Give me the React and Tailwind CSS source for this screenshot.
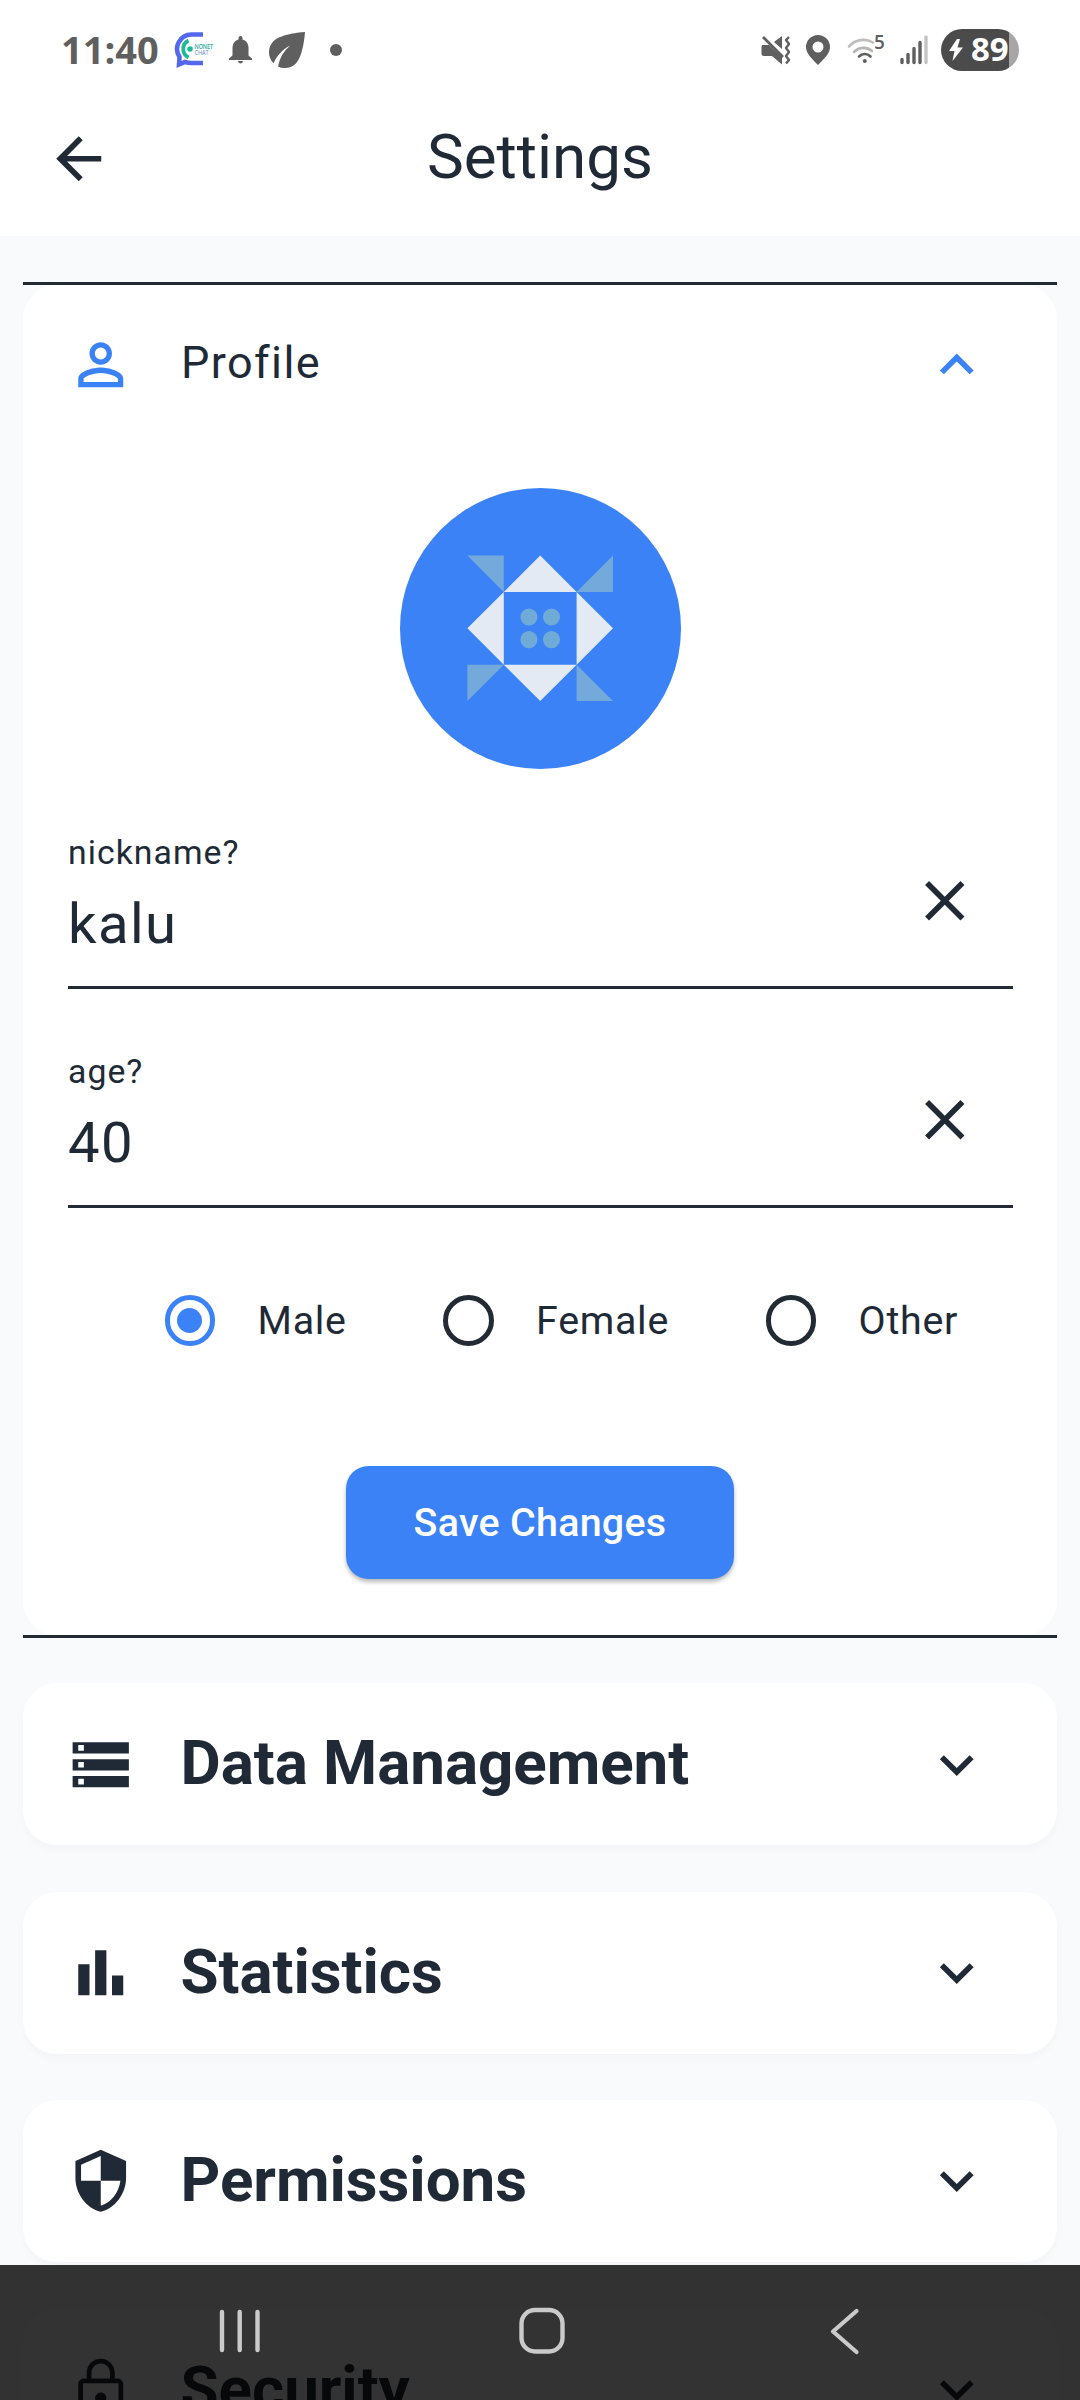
import React from "react";

const PATHS = {
  back: "M20 11H7.83l5.59-5.59L12 4l-8 8 8 8 1.41-1.41L7.83 13H20v-2z",
  person:
    "M12 5.9a2.1 2.1 0 1 1 0 4.2 2.1 2.1 0 0 1 0-4.2m0 9c2.97 0 6.1 1.46 6.1 2.1v1.1H5.9V17c0-.64 3.13-2.1 6.1-2.1M12 4C9.79 4 8 5.79 8 8s1.79 4 4 4 4-1.79 4-4-1.79-4-4-4zm0 9c-2.67 0-8 1.34-8 4v3h16v-3c0-2.66-5.33-4-8-4z",
  up: "M12 8l-6 6 1.41 1.41L12 10.83l4.59 4.58L18 14z",
  down: "M16.59 8.59L12 13.17 7.41 8.59 6 10l6 6 6-6z",
  close:
    "M19 6.41L17.59 5 12 10.59 6.41 5 5 6.41 10.59 12 5 17.59 6.41 19 12 13.41 17.59 19 19 17.59 13.41 12z",
  storage:
    "M2 20h20v-4H2v4zm2-3h2v2H4v-2zM2 4v4h20V4H2zm4 3H4V5h2v2zm-4 7h20v-4H2v4zm2-3h2v2H4v-2z",
  bars: "M4 9h4v11H4zM16 13h4v7h-4zM10 4h4v16h-4z",
  shield:
    "M12 1L3 5v6c0 5.55 3.84 10.74 9 12 5.16-1.26 9-6.45 9-12V5l-9-4zm0 10.99h7c-.53 4.12-3.28 7.79-7 8.94V12H5V6.3l7-3.11v8.8z",
  lock: "M18 8h-1V6c0-2.76-2.24-5-5-5S7 3.24 7 6v2H6c-1.1 0-2 .9-2 2v10c0 1.1.9 2 2 2h12c1.1 0 2-.9 2-2V10c0-1.1-.9-2-2-2zM8.7 6c0-1.82 1.48-3.3 3.3-3.3s3.3 1.48 3.3 3.3v2H8.7V6zM18.3 20.3H5.7V9.7h12.6v10.6zM12 17c1.1 0 2-.9 2-2s-.9-2-2-2-2 .9-2 2 .9 2 2 2z",
  leaf: "M6.05 8.05a7 7 0 0 0-.02 9.88c1.47-3.4 4.09-6.24 7.36-7.93A15.95 15.95 0 0 0 8 19.32c2.6 1.23 5.8.78 7.95-1.37C19.43 14.47 20 4 20 4S9.53 4.57 6.05 8.05z",
};

function Icon({ name, className = "size-[67.5px]" }) {
  return (
    <svg viewBox="0 0 24 24" fill="currentColor" className={`shrink-0 ${className}`}>
      <path d={PATHS[name]} />
    </svg>
  );
}

function StatusBar() {
  return (
    <div className="absolute inset-x-0 top-0 flex h-[100px] items-center justify-between pl-[61px] pr-[61px] text-[#5f5f5f]">
      <div className="flex items-center">
        <span className="-mt-[2px] w-[113px] font-['Open_Sans',sans-serif] text-[38px] leading-[52px] font-bold">11:40</span>
        <svg viewBox="0 0 42 38" className="h-[38px] w-[42px]">
          <path d="M29 3.500H17.500A14.500 14.500 0 0 0 5.500 26L5 33.500 11 31Q14 32 17.500 32H29" fill="none" stroke="#5468ee" strokeWidth="4.500" />
          <path d="M14.500 9.500a9.500 9.500 0 0 0 0 17" fill="none" stroke="#1cb99b" strokeWidth="3.800" />
          <circle cx="16" cy="18" r="2.800" fill="#1cb99b" />
          <text x="20.500" y="17.500" fontSize="6.500" fontWeight="600" fontFamily="Open Sans, sans-serif" fill="#25a6a0" textLength="18.500" lengthAdjust="spacingAndGlyphs">NONET</text>
          <text x="20.500" y="24" fontSize="6.500" fontFamily="Open Sans, sans-serif" fill="#5a7fc0" textLength="14" lengthAdjust="spacingAndGlyphs">CHAT</text>
        </svg>
        <svg viewBox="0 0 23 28" fill="currentColor" className="ml-[13px] h-[28px] w-[23px]">
          <path d="M9.500 2a2 2 0 0 1 4 0v1.500C17.500 4.500 19.500 8 19.500 12v7.500l3.500 3V24H0v-1.500l3.500-3V12c0-4 2-7.500 6-8.500zM9 25h5a2.500 2.500 0 0 1-5 0z" />
        </svg>
        <Icon name="leaf" className="ml-2 size-[54px]" />
        <span className="ml-[16px] size-[12px] rounded-full bg-current" />
      </div>
      <div className="flex items-center">
        <svg viewBox="0 0 30 30" className="h-[30px] w-[30px]">
          <path d="M1 10h7l13 12v7.500L11 21H3a2.500 2.500 0 0 1-2.500-2.500V12zM13 7l8-6v13z" fill="currentColor" />
          <path d="M2 2l20 20" stroke="currentColor" strokeWidth="2.600" />
          <path d="M28 2l-3 3 3 4-3 4 3 4-3 4 3 4-3 3.500" fill="none" stroke="currentColor" strokeWidth="2.400" strokeLinejoin="round" />
        </svg>
        <svg viewBox="0 0 24 30" className="ml-[15px] h-[30px] w-[24px]">
          <path fill="currentColor" fillRule="evenodd" d="M12 0a12 12 0 0 0-12 12c0 7 6 11.500 12 18 6-6.500 12-11 12-18A12 12 0 0 0 12 0zm0 6.500a5.500 5.500 0 1 1 0 11 5.500 5.500 0 0 1 0-11z" />
        </svg>
        <div className="ml-[17px] flex w-[53px] items-start">
          <svg viewBox="0 0 28 28" className="mt-[1px] h-[28px] w-[28px]" fill="none" strokeWidth="2.600" strokeLinecap="round">
            <path d="M2 9.500A19 19 0 0 1 26 5.500" stroke="#bdbdbd" />
            <path d="M7 15a13 13 0 0 1 18-1" stroke="#b5b5b5" />
            <path d="M12 19.500a8 8 0 0 1 11.500 0" stroke="currentColor" />
            <circle cx="17.800" cy="24" r="2" fill="currentColor" />
          </svg>
          <span className="-mt-[4px] -ml-[1px] font-['Open_Sans',sans-serif] text-[19px] leading-[20px] font-semibold">5</span>
        </div>
        <svg viewBox="0 0 28 30" className="h-[30px] w-[28px]" strokeWidth="3.400" strokeLinecap="round" stroke="currentColor">
          <path d="M2 24.500v3M8 19.500v8M14 13.500v14M20 7.500v20" />
          <path d="M26 2v25.500" stroke="#c4c4c4" />
        </svg>
        <div className="ml-[13px] flex h-[42px] w-[78px] items-center rounded-full bg-[linear-gradient(to_right,#4b4b4b_68px,#a6a6a6_68px)] pl-[7px] text-white">
          <svg viewBox="0 0 16 24" className="h-[24px] w-[16px]">
            <path d="M9 1L1 13h5.500l-2 10L15 9.500H9.500L12 1z" fill="currentColor" />
          </svg>
          <span className="-mt-[2px] ml-[7px] font-['Open_Sans',sans-serif] text-[33px] leading-[40px] font-bold">89</span>
        </div>
      </div>
    </div>
  );
}

function Avatar() {
  return (
    <svg viewBox="0 0 281 281" className="mx-auto mt-[44px] block size-[281px]">
      <circle cx="140.500" cy="140.500" r="140.500" fill="#3b82f6" />
      <g transform="translate(67.400 67.500) scale(36.400)">
        <path d="M1 1L2 0l1 1zM3 1l1 1-1 1zM3 3L2 4 1 3zM1 3L0 2l1-1z" fill="#e3eaf4" />
        <path d="M0 0h1v1zM4 0v1H3zM0 3h1L0 4zM3 3l1 1H3z" fill="#74a9dc" />
        <g fill="#6fabd6">
          <circle cx="1.690" cy="1.690" r=".235" />
          <circle cx="2.310" cy="1.690" r=".235" />
          <circle cx="1.690" cy="2.310" r=".235" />
          <circle cx="2.310" cy="2.310" r=".235" />
        </g>
      </g>
    </svg>
  );
}

function Field({ label, value, className }) {
  return (
    <div className={`mx-[44.5px] flex h-[160px] justify-between border-b-[3px] border-[#222a33] pr-[34px] ${className}`}>
      <div className="pt-[4px] pl-[0.5px]">
        <div className="text-[33.75px] leading-[40px] tracking-[1.05px]">{label}</div>
        <div className="mt-[18px] text-[56.25px] leading-[66px] tracking-[1.4px]">{value}</div>
      </div>
      <Icon name="close" className="mt-[38px] size-[67.5px]" />
    </div>
  );
}

function Radio({ label, checked, className }) {
  return (
    <div className={`flex items-center ${className}`}>
      <span
        className={`flex size-[50.6px] shrink-0 items-center justify-center rounded-full border-[5.6px] ${
          checked ? "border-[#3b82f6]" : "border-[#222a33]"
        }`}
      >
        {checked && <span className="size-[25.3px] shrink-0 rounded-full bg-[#3b82f6]" />}
      </span>
      <span className="ml-[42.5px] text-[39.4px] leading-[56px] tracking-[0.7px]">{label}</span>
    </div>
  );
}

function Section({ icon, title }) {
  return (
    <div className="mt-[46.4px] flex h-[162px] items-center rounded-[34px] bg-white pr-[67px] pl-[44px] shadow-[0_5px_10px_rgba(0,0,0,0.025)]">
      <Icon name={icon} />
      <h2 className="-mt-[2px] ml-[46px] flex-1 text-[61.9px] leading-[74px] font-bold tracking-[-0.05px]">{title}</h2>
      <Icon name="down" />
    </div>
  );
}

function NavBar() {
  return (
    <div className="absolute inset-x-0 bottom-0 flex h-[135px] items-center justify-between bg-black/80 pr-[217px] pb-[4px] pl-[216px] text-[#cacaca]">
      <svg viewBox="0 0 48 48" className="size-[48px]" stroke="currentColor" strokeWidth="4.400" strokeLinecap="round">
        <path d="M6 5v38M23.700 5v38M41.500 5v38" />
      </svg>
      <svg viewBox="0 0 48 48" className="ml-[4px] size-[48px]" fill="none" stroke="currentColor" strokeWidth="4.400">
        <rect x="3.500" y="3" width="41" height="41.500" rx="13.500" />
      </svg>
      <svg viewBox="0 0 48 48" className="size-[48px]" fill="none" stroke="currentColor" strokeWidth="4.200" strokeLinecap="round" strokeLinejoin="round">
        <path d="M41.500 4L18 24.500 41.500 45" />
      </svg>
    </div>
  );
}

export default function App() {
  return (
    <div className="relative h-[2400px] w-[1080px] overflow-hidden bg-[#f8fafc] font-[Roboto,sans-serif] text-[#202a36]">
      <StatusBar />
      <header className="-mb-px flex h-[236px] items-center bg-white pt-[81px] pl-[45px]">
        <Icon name="back" />
        <h1 className="-mt-[4px] ml-[-112.5px] w-[1080px] shrink-0 text-center text-[61.9px] leading-[74px]">Settings</h1>
      </header>

      <main className="mx-[23px] mt-[47px]">
        <section className="border-y-[3px] border-[#222a33]">
          <div className="h-[1350px] overflow-hidden rounded-[34px] bg-white">
            <div className="flex h-[159px] items-center pr-[67px] pl-[44px]">
              <span className="text-[#3b82f6]">
                <Icon name="person" />
              </span>
              <h2 className="-mt-[4px] ml-[46.5px] flex-1 text-[45px] leading-[54px] tracking-[1.4px]">Profile</h2>
              <span className="text-[#3b82f6]">
                <Icon name="up" />
              </span>
            </div>
            <Avatar />
            <Field label="nickname?" value="kalu" className="mt-[60px]" />
            <Field label="age?" value="40" className="mt-[59px]" />
            <div className="mt-[78.5px] flex h-[68px] items-center pl-[141.5px]">
              <Radio label="Male" checked className="w-[278.500px]" />
              <Radio label="Female" className="w-[322.500px]" />
              <Radio label="Other" className="" />
            </div>
            <button className="mx-auto mt-[111.5px] flex h-[113px] w-[388px] items-center justify-center rounded-[22.5px] bg-[#3b82f6] text-[39.4px] leading-[46px] font-medium tracking-[0.28px] text-white shadow-[0_3px_4px_rgba(0,0,0,0.28)]">
              Save Changes
            </button>
          </div>
        </section>
        <div className="-mt-px">
          <Section icon="storage" title="Data Management" />
          <Section icon="bars" title="Statistics" />
          <Section icon="shield" title="Permissions" />
          <Section icon="lock" title="Security" />
        </div>
      </main>

      <NavBar />
    </div>
  );
}
